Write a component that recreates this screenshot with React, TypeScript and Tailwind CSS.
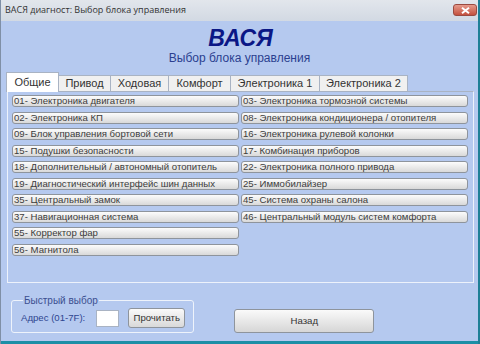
import React from 'react';

const leftItems = [
  '01- Электроника двигателя',
  '02- Электроника КП',
  '09- Блок управления бортовой сети',
  '15- Подушки безопасности',
  '18- Дополнительный / автономный отопитель',
  '19- Диагностический интерфейс шин данных',
  '35- Центральный замок',
  '37- Навигационная система',
  '55- Корректор фар',
  '56- Магнитола',
];

const rightItems = [
  '03- Электроника тормозной системы',
  '08- Электроника кондиционера / отопителя',
  '16- Электроника рулевой колонки',
  '17- Комбинация приборов',
  '22- Электроника полного привода',
  '25- Иммобилайзер',
  '45- Система охраны салона',
  '46- Центральный модуль систем комфорта',
];

const tabs = [
  { label: 'Общие', w: 'w-[53px]' },
  { label: 'Привод', w: 'w-[52px]' },
  { label: 'Ходовая', w: 'w-[58px]' },
  { label: 'Комфорт', w: 'w-[62px]' },
  { label: 'Электроника 1', w: 'w-[89px]' },
  { label: 'Электроника 2', w: 'w-[88px]' },
];

const BlockButton: React.FC<{ label: string }> = ({ label }) => (
  <button className="h-[12px] w-full rounded-[3px] border border-[#8e949c] bg-gradient-to-b from-[#fcfcfc] to-[#d9d9d9] pl-[1px] text-left text-[9.6px] leading-[10px] text-[#3c3c3c] whitespace-nowrap overflow-hidden">
    {label}
  </button>
);

export default function App() {
  return (
    <div className="relative flex h-[344px] w-[480px] flex-col overflow-hidden border-l border-r-2 border-l-[#7f8fa6] border-r-[#1f7f96] bg-[#b5c9ef] font-['Liberation_Sans',Arial,sans-serif]">
      {/* title bar */}
      <div className="flex h-[21px] shrink-0 items-start justify-between bg-gradient-to-b from-[#e2e6ec] to-[#d2d9e3] pl-[4px] pr-[1px]">
        <span className="mt-[4px] text-[9px] leading-[12px] text-[#333] font-['Open_Sans',sans-serif]">
          ВАСЯ диагност: Выбор блока управления
        </span>
        <div className="mt-[4px] flex h-[12px] w-[24px] items-center justify-center rounded-[3px] border border-[#9a4a40] bg-gradient-to-b from-[#e59a8c] to-[#c4503e]">
          <svg width="9" height="7" viewBox="0 0 9 7">
            <path d="M1 0.8 L8 6.2 M8 0.8 L1 6.2" stroke="#fff" strokeWidth="2" />
          </svg>
        </div>
      </div>

      {/* heading */}
      <div className="flex flex-col items-center pt-[4px]">
        <div className="text-[23px] font-bold italic leading-[26px] text-[#0b1786] pl-[2px]">ВАСЯ</div>
        <div className="text-[12px] leading-[15px] text-[#2b3f8f]">Выбор блока управления</div>
      </div>

      {/* tabs */}
      <div className="mt-[6px] flex items-end pl-[5px] h-[19px]">
        {tabs.map((t, i) =>
          i === 0 ? (
            <div
              key={t.label}
              className={`${t.w} relative z-10 -mb-[1px] flex h-[20px] items-center justify-center border border-b-0 border-[#a9b3c3] bg-white text-[11px] text-[#333]`}
            >
              {t.label}
            </div>
          ) : (
            <div
              key={t.label}
              className={`${t.w} flex h-[16px] items-center justify-center border border-l-0 border-b-0 border-[#a9b3c3] bg-[#f0f0f0] text-[11px] text-[#333]`}
            >
              {t.label}
            </div>
          )
        )}
      </div>

      {/* tab panel */}
      <div className="ml-[6px] h-[192px] w-[467px] border border-[#edf2fb] border-t-[#a9b3c3] pl-[4px] pr-[5px] pt-[3px]">
        <div className="grid grid-cols-2 gap-x-[2px]">
          <div className="flex flex-col gap-[4.5px]">
            {leftItems.map((l) => (
              <BlockButton key={l} label={l} />
            ))}
          </div>
          <div className="flex flex-col gap-[4.5px]">
            {rightItems.map((l) => (
              <BlockButton key={l} label={l} />
            ))}
          </div>
        </div>
      </div>

      {/* bottom */}
      <div className="mt-[12px] flex items-start pl-[10px]">
        <fieldset className="h-[38px] w-[181px] rounded-[3px] border border-[#eef3fb] px-[8px]">
          <legend className="ml-[3px] px-[1px] text-[10px] leading-[11px] text-[#3b4f8f]">Быстрый выбор</legend>
          <div className="mt-[2px] flex items-center">
            <span className="whitespace-nowrap text-[9.6px] text-[#2e4590] ml-[1px]">Адрес (01-7F):</span>
            <div className="ml-[11px] h-[17px] w-[23px] border border-[#a9b3c3] bg-white" />
            <button className="ml-[9px] h-[20px] w-[57px] rounded-[3px] border border-[#8e949c] bg-gradient-to-b from-[#fafafa] to-[#d9d9d9] text-[9.6px] text-[#333]">
              Прочитать
            </button>
          </div>
        </fieldset>
        <button className="ml-[40px] mt-[14px] h-[24px] w-[140px] rounded-[3px] border border-[#8e949c] bg-gradient-to-b from-[#fafafa] to-[#d6d6d6] text-[9.6px] text-[#333]">
          Назад
        </button>
      </div>

      <div className="absolute bottom-0 left-0 h-[3px] w-full bg-[#1c8fa6]" />
    </div>
  );
}
